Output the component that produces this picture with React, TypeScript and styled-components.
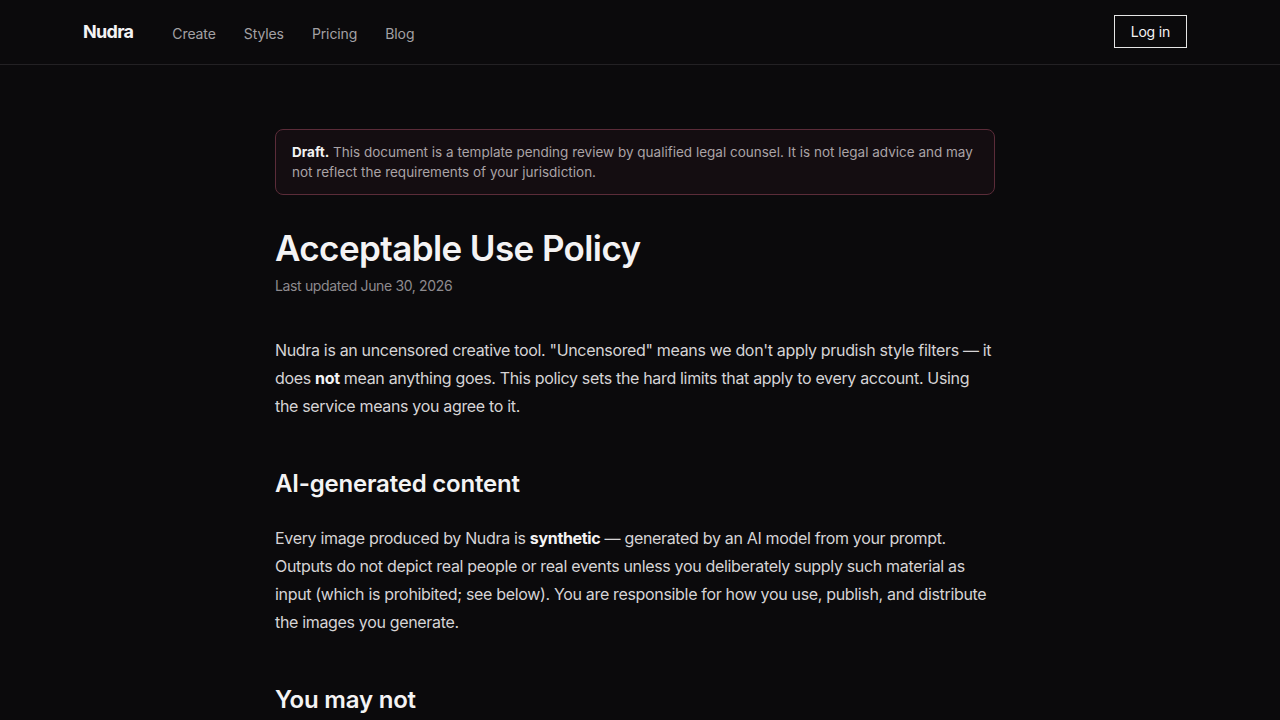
import React from 'react';
import styled, { createGlobalStyle } from 'styled-components';

const colours = {
    page: '#0b0a0c',
    line: '#232124',
    text: '#d6d4d6',
    heading: '#f4f3f4',
    muted: '#8e8b8f',
    nav: '#a3a1a4',
    noticeBg: '#140d11',
    noticeBorder: '#5b2c39',
    noticeText: '#aaa3a6',
};

const GlobalStyle = createGlobalStyle`
    * { box-sizing: border-box; }
    body {
        margin: 0;
        background: ${ colours.page };
        color: ${ colours.text };
        font-family: Inter, "Noto Sans", "Liberation Sans", sans-serif;
        -webkit-font-smoothing: antialiased;
    }
`;

const Header = styled.header`
    height: 65px;
    border-bottom: 1px solid ${ colours.line };
    display: flex;
    align-items: center;
    padding: 0 93px 0 83px;
`;

const Logo = styled.a`
    font-size: 18px;
    font-weight: 700;
    color: ${ colours.heading };
    letter-spacing: -0.7px;
    margin-right: 39px;
    margin-top: -1px;
`;

const Nav = styled.nav`
    display: flex;
    gap: 28px;
    flex: 1;
`;

const NavLink = styled.a`
    font-size: 14px;
    letter-spacing: -0.1px;
    color: ${ colours.nav };
    margin-top: 2px;
`;

const LoginButton = styled.button`
    height: 33px;
    padding: 0 16px;
    background: transparent;
    border: 1px solid #e6e6e6;
    color: ${ colours.heading };
    font-family: inherit;
    font-size: 14px;
    letter-spacing: -0.2px;
    margin-top: -1px;
`;

const Page = styled.div`
    padding-right: 10px;
`;

const Main = styled.main`
    width: 720px;
    margin: 0 auto;
    padding-top: 64px;
    padding-bottom: 80px;
`;

const Notice = styled.div`
    background: ${ colours.noticeBg };
    border: 1px solid ${ colours.noticeBorder };
    border-radius: 8px;
    padding: 12px 16px;
    font-size: 13.5px;
    line-height: 20px;
    color: ${ colours.noticeText };
`;

const Strong = styled.strong`
    font-weight: 700;
    color: ${ colours.heading };
`;

const Title = styled.h1`
    margin: 32px 0 0;
    font-size: 35px;
    line-height: 43px;
    font-weight: 600;
    letter-spacing: -0.6px;
    color: ${ colours.heading };
`;

const Updated = styled.p`
    margin: 6px 0 0;
    font-size: 14px;
    line-height: 20px;
    letter-spacing: -0.35px;
    color: ${ colours.muted };
`;

const Paragraph = styled.p<{ gap: number }>`
    margin: ${ p => p.gap }px 0 0;
    font-size: 16px;
    line-height: 28px;
    letter-spacing: -0.33px;
    color: ${ colours.text };
`;

const SectionTitle = styled.h2`
    margin: 48px 0 0;
    font-size: 24px;
    line-height: 32px;
    font-weight: 600;
    letter-spacing: -0.2px;
    color: ${ colours.heading };
`;

export default function App(): JSX.Element {
    return (
        <>
            <GlobalStyle />
            <Header>
                <Logo>Nudra</Logo>
                <Nav>
                    <NavLink>Create</NavLink>
                    <NavLink>Styles</NavLink>
                    <NavLink>Pricing</NavLink>
                    <NavLink>Blog</NavLink>
                </Nav>
                <LoginButton>Log in</LoginButton>
            </Header>
            <Page>
                <Main>
                    <Notice>
                        <Strong>Draft.</Strong> This document is a template pending review by qualified legal counsel. It is not legal advice and may not reflect the requirements of your jurisdiction.
                    </Notice>
                    <Title>Acceptable Use Policy</Title>
                    <Updated>Last updated June 30, 2026</Updated>
                    <Paragraph gap={ 40 }>
                        Nudra is an uncensored creative tool. "Uncensored" means we don't apply prudish style filters — it does <Strong>not</Strong> mean anything goes. This policy sets the hard limits that apply to every account. Using the service means you agree to it.
                    </Paragraph>
                    <SectionTitle>AI-generated content</SectionTitle>
                    <Paragraph gap={ 24 }>
                        Every image produced by Nudra is <Strong>synthetic</Strong> — generated by an AI model from your prompt. Outputs do not depict real people or real events unless you deliberately supply such material as input (which is prohibited; see below). You are responsible for how you use, publish, and distribute the images you generate.
                    </Paragraph>
                    <SectionTitle>You may not</SectionTitle>
                </Main>
            </Page>
        </>
    );
}
